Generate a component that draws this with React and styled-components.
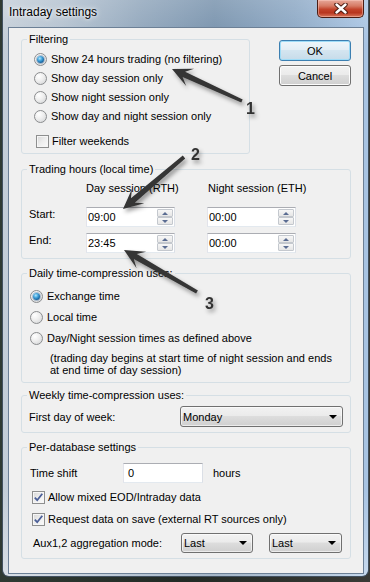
import React from 'react';
import styled, { createGlobalStyle } from 'styled-components';

const UI = `"Liberation Sans", Arial, sans-serif`;

const Global = createGlobalStyle`
  html, body { margin: 0; padding: 0; width: 370px; height: 582px; overflow: hidden; background: #27302b; }
  #root { width: 370px; height: 582px; }
  *, *::before, *::after { box-sizing: border-box; }
`;

const Page = styled.div`
  position: relative;
  width: 370px;
  height: 582px;
  background: linear-gradient(90deg, #2f3a33, #222a25 50%, #3a3a36);
`;

const Frame = styled.div`
  margin-left: 2px;
  width: 367px;
  height: 577px;
  display: flex;
  flex-direction: column;
  border: 1px solid #41505f;
  border-top: none;
  border-radius: 0 0 7px 7px;
  background:
    linear-gradient(180deg, rgba(255,255,255,0.18), rgba(255,255,255,0) 8%, rgba(255,255,255,0) 85%, rgba(255,255,255,0.35)),
    linear-gradient(90deg, #c4ced8 0%, #b3c1cf 16%, #8ea4ba 38%, #7590ab 58%, #8aa6c3 80%, #a9c5e4 100%);
  font-family: ${UI};
  font-size: 11px;
  color: #000;
`;

const TitleBar = styled.div`
  height: 27px;
  flex: none;
  display: flex;
  justify-content: space-between;
  align-items: flex-start;
`;

const Title = styled.div`
  padding: 5px 0 0 6px;
  font-size: 12px;
  line-height: 14px;
  color: #000;
  text-shadow: 0 0 6px rgba(255,255,255,0.95), 0 0 3px rgba(255,255,255,0.9);
`;

const CloseButton = styled.div`
  width: 47px;
  height: 18px;
  margin-right: 4px;
  display: flex;
  align-items: center;
  justify-content: center;
  border: 1px solid #4b1d14;
  border-top: none;
  border-radius: 0 0 5px 5px;
  background: linear-gradient(180deg, #e7a899 0%, #d67a64 35%, #c2432a 55%, #b8361f 75%, #d8775c 100%);
  box-shadow: inset 0 0 0 1px rgba(255,210,200,0.45);
`;

const Client = styled.div`
  flex: 1;
  margin: 0 4px 2px 5px;
  border: 1px solid #6c8096;
  background: #f0f0f0;
  padding: 5px 12px 0 12px;
  display: flex;
  flex-direction: column;
`;

const TopRow = styled.div`
  display: flex;
  justify-content: space-between;
  align-items: flex-start;
`;

const ButtonColumn = styled.div`
  margin-top: 7px;
  display: flex;
  flex-direction: column;
  gap: 4px;
`;

const Button = styled.button`
  width: 72px;
  height: 21px;
  padding: 0;
  font-family: ${UI};
  font-size: 11px;
  color: #000;
  border: 1px solid ${p => (p.$default ? '#3c7fb1' : '#707070')};
  border-radius: 3px;
  background: ${p =>
    p.$default
      ? 'linear-gradient(180deg, #eef6fb 0%, #e3eef5 45%, #d4e5f0 50%, #c6dbe9 100%)'
      : 'linear-gradient(180deg, #f2f2f2 0%, #ebebeb 45%, #dddddd 50%, #cfcfcf 100%)'};
  box-shadow: inset 0 0 0 1px ${p => (p.$default ? '#9fdcf7' : '#fcfcfc')};
`;

const Group = styled.fieldset`
  margin: ${p => p.$mt || 0}px 0 0 0;
  padding: 0;
  min-width: 0;
  width: ${p => p.$w || 'auto'};
  border: 1px solid #d5dfe5;
  border-radius: 3px;
`;

const Legend = styled.legend`
  margin-left: 5px;
  padding: 0 2px;
  line-height: 13px;
  font-size: 11px;
  color: #000;
`;

const GroupBody = styled.div`
  padding: ${p => p.$pt}px 0 ${p => p.$pb}px ${p => p.$pl}px;
  display: flex;
  flex-direction: column;
`;

const OptionRow = styled.label`
  display: flex;
  align-items: center;
  gap: ${p => p.$gap || 4}px;
  height: ${p => p.$h || 19}px;
  margin-top: ${p => p.$mt || 0}px;
  margin-left: ${p => p.$ml || 0}px;
  line-height: 13px;
  white-space: nowrap;
`;

const RadioCircle = styled.span`
  width: 13px;
  height: 13px;
  flex: none;
  border-radius: 50%;
  border: 1px solid #8a8c8e;
  background: radial-gradient(circle at 35% 30%, #ffffff 0%, #eeeeee 45%, #cfd1d3 100%);
  display: flex;
  align-items: center;
  justify-content: center;
`;

const RadioDot = styled.span`
  width: 7px;
  height: 7px;
  border-radius: 50%;
  background: radial-gradient(circle at 40% 35%, #b6e6fb 0%, #45a6dd 35%, #17639f 70%, #0d3f70 100%);
  box-shadow: 0 0 0 1px rgba(40, 90, 140, 0.35);
`;

const CheckSquare = styled.span`
  width: 13px;
  height: 13px;
  flex: none;
  border: 1px solid #8e8f8f;
  background: linear-gradient(135deg, #d6d6d6 0%, #eeeeee 50%, #fbfbfb 100%);
  box-shadow: inset 0 0 0 1px #f6f6f6;
  display: flex;
  align-items: center;
  justify-content: center;
`;

const Note = styled.div`
  margin: 3px 0 0 20px;
  line-height: 12px;
  white-space: nowrap;
`;

const TimeGrid = styled.div`
  display: grid;
  grid-template-columns: 57px 121px 89px;
  grid-template-rows: 19px 20px 20px;
  row-gap: 6px;
`;

const ColHead = styled.div`
  line-height: 13px;
  padding-left: ${p => p.$pl || 0}px;
  white-space: nowrap;
`;

const RowLabel = styled.div`
  line-height: 13px;
  padding-top: 1px;
`;

const SpinBox = styled.div`
  width: 89px;
  display: flex;
  align-items: stretch;
  height: 20px;
  border: 1px solid;
  border-color: #abadb3 #dbdfe6 #e3e9ef #e2e3ea;
  background: #fff;
`;

const SpinText = styled.div`
  flex: 1;
  display: flex;
  align-items: center;
  padding-left: 1px;
  font-size: 11px;
`;

const SpinButtons = styled.div`
  width: 16px;
  margin: 1px 1px 1px 0;
  display: flex;
  flex-direction: column;
`;

const SpinButton = styled.div`
  flex: 1;
  border: 1px solid #c4c8ce;
  border-radius: 1px;
  background: linear-gradient(180deg, #f7f7f7, #e6e6e6);
  display: flex;
  align-items: center;
  justify-content: center;
`;

const Tri = styled.span`
  width: 0;
  height: 0;
  border-left: 3px solid transparent;
  border-right: 3px solid transparent;
  ${p => (p.$up ? 'border-bottom: 3px solid #5a6c92;' : 'border-top: 3px solid #5a6c92;')}
`;

const FieldRow = styled.div`
  display: flex;
  align-items: center;
  height: ${p => p.$h || 20}px;
  margin-top: ${p => p.$mt || 0}px;
  margin-left: ${p => p.$ml || 0}px;
`;

const FieldLabel = styled.div`
  width: ${p => p.$w}px;
  flex: none;
  white-space: nowrap;
`;

const TextBox = styled.div`
  width: ${p => p.$w}px;
  height: 20px;
  border: 1px solid;
  border-color: #abadb3 #dbdfe6 #e3e9ef #e2e3ea;
  background: #fff;
  display: flex;
  align-items: center;
  padding-left: 4px;
`;

const Unit = styled.div`
  margin-left: 10px;
`;

const Combo = styled.div`
  width: ${p => p.$w}px;
  height: ${p => p.$h || 20}px;
  margin-left: ${p => p.$ml || 0}px;
  flex: none;
  border: 1px solid #707070;
  border-radius: 3px;
  background: linear-gradient(180deg, #f2f2f2 0%, #ebebeb 45%, #dddddd 50%, #cfcfcf 100%);
  box-shadow: inset 0 0 0 1px rgba(255,255,255,0.6);
  display: flex;
  align-items: center;
  justify-content: space-between;
  padding: 0 5px 0 2px;
`;

const ComboArrow = styled.span`
  width: 0;
  height: 0;
  border-left: 4px solid transparent;
  border-right: 4px solid transparent;
  border-top: 4px solid #000;
`;

const Overlay = styled.svg`
  position: absolute;
  left: 0;
  top: 0;
  pointer-events: none;
`;

const Radio = ({ checked, children, ...rest }) => (
  <OptionRow {...rest}>
    <RadioCircle>{checked && <RadioDot />}</RadioCircle>
    <span>{children}</span>
  </OptionRow>
);

const Check = ({ checked, children, ...rest }) => (
  <OptionRow $gap={3} {...rest}>
    <CheckSquare>
      {checked && (
        <svg width="11" height="11" viewBox="0 0 11 11">
          <path d="M1.8 5.6 L4.2 8.2 L9.3 1.8" fill="none" stroke="#4b5f98" strokeWidth="1.8" />
        </svg>
      )}
    </CheckSquare>
    <span>{children}</span>
  </OptionRow>
);

const Spin = ({ value }) => (
  <SpinBox>
    <SpinText>{value}</SpinText>
    <SpinButtons>
      <SpinButton><Tri $up /></SpinButton>
      <SpinButton><Tri /></SpinButton>
    </SpinButtons>
  </SpinBox>
);

const Select = ({ children, ...rest }) => (
  <Combo {...rest}>
    <span>{children}</span>
    <ComboArrow />
  </Combo>
);

function arrowPoints(tail, tip) {
  const [x1, y1] = tail;
  const [x2, y2] = tip;
  const dx = x2 - x1;
  const dy = y2 - y1;
  const len = Math.hypot(dx, dy);
  const ux = dx / len;
  const uy = dy / len;
  const nx = -uy;
  const ny = ux;
  const L = 20;
  const H = 9.5;
  const N = 13;
  const w0 = 1.8;
  const w1 = 3;
  const bx = x2 - ux * L;
  const by = y2 - uy * L;
  const mx = x2 - ux * N;
  const my = y2 - uy * N;
  const pts = [
    [x1 + nx * w0, y1 + ny * w0],
    [mx + nx * w1, my + ny * w1],
    [bx + nx * H, by + ny * H],
    [x2, y2],
    [bx - nx * H, by - ny * H],
    [mx - nx * w1, my - ny * w1],
    [x1 - nx * w0, y1 - ny * w0],
  ];
  return pts.map(p => `${p[0].toFixed(1)},${p[1].toFixed(1)}`).join(' ');
}

const arrows = [
  { tail: [242, 101], tip: [172, 69], label: '1', lx: 246, ly: 114 },
  { tail: [184, 157], tip: [123, 209], label: '2', lx: 191, ly: 160 },
  { tail: [197, 292], tip: [124, 250], label: '3', lx: 205, ly: 309 },
];

export default function App() {
  return (
    <Page>
      <Global />
      <Frame>
        <TitleBar>
          <Title>Intraday settings</Title>
          <CloseButton>
            <svg width="14" height="11" viewBox="0 0 14 11">
              <path d="M2.5 1.5 L11.5 9.5 M11.5 1.5 L2.5 9.5" stroke="#4a1a10" strokeWidth="4.4" strokeLinecap="round" />
              <path d="M2.5 1.5 L11.5 9.5 M11.5 1.5 L2.5 9.5" stroke="#ffffff" strokeWidth="2.4" strokeLinecap="round" />
            </svg>
          </CloseButton>
        </TitleBar>
        <Client>
          <TopRow>
            <Group $w="229px">
              <Legend>Filtering</Legend>
              <GroupBody $pt={4} $pl={12} $pb={2}>
                <Radio checked>Show 24 hours trading (no filtering)</Radio>
                <Radio>Show day session only</Radio>
                <Radio>Show night session only</Radio>
                <Radio>Show day and night session only</Radio>
                <Check $mt={6} $ml={2}>Filter weekends</Check>
              </GroupBody>
            </Group>
            <ButtonColumn>
              <Button $default>OK</Button>
              <Button>Cancel</Button>
            </ButtonColumn>
          </TopRow>

          <Group $mt={9}>
            <Legend>Trading hours (local time)</Legend>
            <GroupBody $pt={6} $pl={7} $pb={5}>
              <TimeGrid>
                <span />
                <ColHead>Day session (RTH)</ColHead>
                <ColHead $pl={1}>Night session (ETH)</ColHead>
                <RowLabel>Start:</RowLabel>
                <Spin value="09:00" />
                <Spin value="00:00" />
                <RowLabel>End:</RowLabel>
                <Spin value="23:45" />
                <Spin value="00:00" />
              </TimeGrid>
            </GroupBody>
          </Group>

          <Group $mt={8}>
            <Legend>Daily time-compression uses:</Legend>
            <GroupBody $pt={6} $pl={8} $pb={6}>
              <Radio $h={21} checked>Exchange time</Radio>
              <Radio $h={21}>Local time</Radio>
              <Radio $h={21}>Day/Night session times as defined above</Radio>
              <Note>
                (trading day begins at start time of night session and ends
                <br />
                at end time of day session)
              </Note>
            </GroupBody>
          </Group>

          <Group $mt={6}>
            <Legend>Weekly time-compression uses:</Legend>
            <GroupBody $pt={4} $pl={7} $pb={5}>
              <FieldRow $h={21}>
                <FieldLabel $w={151}>First day of week:</FieldLabel>
                <Select $w={163} $h={21}>Monday</Select>
              </FieldRow>
            </GroupBody>
          </Group>

          <Group $mt={8}>
            <Legend>Per-database settings</Legend>
            <GroupBody $pt={9} $pl={8} $pb={5}>
              <FieldRow>
                <FieldLabel $w={93}>Time shift</FieldLabel>
                <TextBox $w={80}>0</TextBox>
                <Unit>hours</Unit>
              </FieldRow>
              <Check checked $mt={5} $ml={2}>Allow mixed EOD/Intraday data</Check>
              <Check checked $mt={3} $ml={2}>Request data on save (external RT sources only)</Check>
              <FieldRow $mt={4} $ml={3}>
                <FieldLabel $w={148}>Aux1,2 aggregation mode:</FieldLabel>
                <Select $w={72}>Last</Select>
                <Select $w={73} $ml={16}>Last</Select>
              </FieldRow>
            </GroupBody>
          </Group>
        </Client>
      </Frame>

      <Overlay width="370" height="582" viewBox="0 0 370 582">
        <defs>
          <filter id="shadow" x="-20%" y="-20%" width="140%" height="140%">
            <feDropShadow dx="2" dy="3" stdDeviation="2" floodColor="#000" floodOpacity="0.4" />
          </filter>
        </defs>
        {arrows.map(a => (
          <g key={a.label} filter="url(#shadow)">
            <polygon points={arrowPoints(a.tail, a.tip)} fill="#353535" />
            <text x={a.lx} y={a.ly} fontFamily={UI} fontWeight="bold" fontSize="16" fill="#333">
              {a.label}
            </text>
          </g>
        ))}
      </Overlay>
    </Page>
  );
}
